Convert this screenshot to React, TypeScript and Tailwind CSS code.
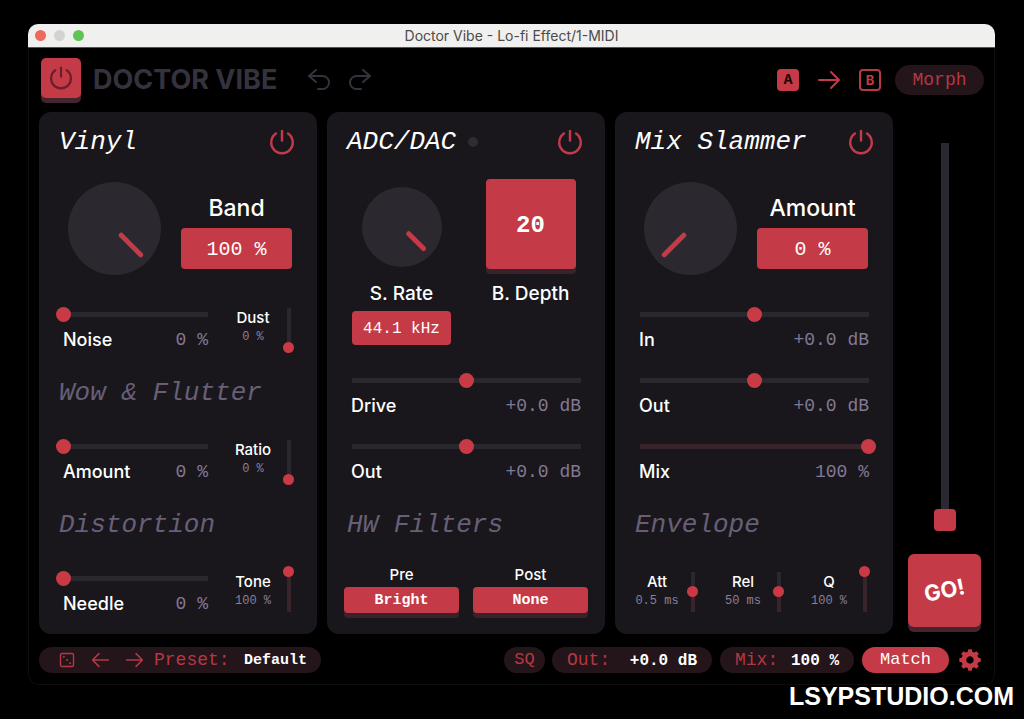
import { useId, useState } from "react";
import type { CSSProperties, ReactNode } from "react";
import { clsx } from "clsx";

const MONO = "font-['Liberation_Mono',monospace]";
const SANS = "font-['Inter',sans-serif]";

const PowerIcon = ({ className }: { className?: string }) => (
  <svg viewBox="0 0 28 28" fill="none" stroke="currentColor" strokeWidth="2.6" strokeLinecap="round" className={className}>
    <path d="M14 2v10.5" />
    <path d="M7.5 4.9a11.6 11.6 0 1 0 13 0" />
  </svg>
);

const UndoIcon = ({ className }: { className?: string }) => (
  <svg viewBox="0 0 24 24" fill="none" stroke="currentColor" strokeWidth="2" strokeLinecap="round" strokeLinejoin="round" className={className}>
    <path d="M9 2 2 8l7 6" />
    <path d="M2 8h13.5a6.5 6.5 0 0 1 0 13H11" />
  </svg>
);

const ArrowIcon = ({ className }: { className?: string }) => (
  <svg viewBox="0 0 24 20" fill="none" stroke="currentColor" strokeWidth="2" strokeLinecap="round" strokeLinejoin="round" className={className}>
    <path d="M2 10h20M14 2l8 8-8 8" />
  </svg>
);

const DiceIcon = () => (
  <svg viewBox="0 0 16 16" fill="none" stroke="currentColor" strokeWidth="1.4" className="size-4">
    <rect x="1.5" y="1.5" width="13" height="13" rx="1.5" />
    <g fill="currentColor" stroke="none">
      <circle cx="4.8" cy="4.8" r="1" />
      <circle cx="8" cy="8" r="1" />
      <circle cx="11.2" cy="11.2" r="1" />
    </g>
  </svg>
);

const TEETH = [0, 45, 90, 135, 180, 225, 270, 315];

const GearIcon = () => (
  <svg viewBox="-11 -11 22 22" className="size-[22px]">
    <circle r="6.1" fill="none" stroke="currentColor" strokeWidth="4.8" />
    {TEETH.map((angle) => (
      <path key={angle} d="M-2.4 -7.5-1.7 -10.7h3.4L2.4 -7.5z" fill="currentColor" transform={`rotate(${angle})`} />
    ))}
  </svg>
);

interface RangeProps {
  id?: string;
  label?: string;
  value: number;
  bipolar?: boolean;
}

const fillStyle = (value: number, bipolar?: boolean) =>
  ({ "--fill": `${bipolar ? 0 : value}%` }) as CSSProperties;

const HRange = ({ id, value, bipolar }: RangeProps) => {
  const [current, setCurrent] = useState(value);
  return (
    <input
      id={id}
      type="range"
      value={current}
      onChange={(e) => setCurrent(Number(e.target.value))}
      style={fillStyle(current, bipolar)}
      className="block h-[15px] w-full cursor-pointer appearance-none bg-[linear-gradient(to_right,#3a242b_var(--fill),#2a282e_var(--fill))] bg-[length:calc(100%-15px)_5px] bg-center bg-no-repeat [&::-webkit-slider-thumb]:size-[15px] [&::-webkit-slider-thumb]:appearance-none [&::-webkit-slider-thumb]:rounded-full [&::-webkit-slider-thumb]:bg-[#c93a47]"
    />
  );
};

const VRange = ({ id, value }: RangeProps) => {
  const [current, setCurrent] = useState(value);
  return (
    <input
      id={id}
      type="range"
      value={current}
      onChange={(e) => setCurrent(Number(e.target.value))}
      style={fillStyle(current)}
      className="block h-[51px] w-[11px] shrink-0 cursor-pointer appearance-none bg-[linear-gradient(to_top,#3a242b_var(--fill),#2a282e_var(--fill))] bg-[length:4px_calc(100%-11px)] bg-center bg-no-repeat [direction:rtl] [writing-mode:vertical-lr] [&::-webkit-slider-thumb]:size-[11px] [&::-webkit-slider-thumb]:appearance-none [&::-webkit-slider-thumb]:rounded-full [&::-webkit-slider-thumb]:bg-[#c93a47]"
    />
  );
};

const SliderRow = ({ label, text, value, bipolar }: RangeProps & { text: string }) => {
  const id = useId();
  return (
    <div className="h-[52px] flex-1 pt-[5px]">
      <HRange id={id} value={value} bipolar={bipolar} />
      <div className="mt-1 flex items-center justify-between px-[7px] leading-7">
        <label htmlFor={id} className={clsx(SANS, "text-[18px] font-medium text-white")}>{label}</label>
        <output htmlFor={id} className={clsx(MONO, "text-[18px] text-[#847895]")}>{text}</output>
      </div>
    </div>
  );
};

const MiniSlider = ({ label, text, value }: RangeProps & { text: string }) => {
  const id = useId();
  return (
    <div className="flex items-start gap-2">
      <div className="flex w-11 flex-col items-center pt-1.5 whitespace-nowrap">
        <label htmlFor={id} className={clsx(SANS, "text-[15px] leading-5 font-medium text-white")}>{label}</label>
        <output htmlFor={id} className={clsx(MONO, "text-[12px] leading-[18px] text-[#8b7f9c]")}>{text}</output>
      </div>
      <VRange id={id} value={value} />
    </div>
  );
};

const Knob = ({ label, value, size }: { label: string; value: number; size: number }) => {
  const [current, setCurrent] = useState(value);
  const r = size / 2;
  return (
    <div className="relative shrink-0" style={{ width: size, height: size }}>
      <svg viewBox={`${-r} ${-r} ${size} ${size}`} className="size-full">
        <circle r={r} fill="#2b2830" />
        <line
          y1={-9.5}
          y2={9.5 - r}
          stroke="#c43a46"
          strokeWidth="5"
          strokeLinecap="round"
          transform={`rotate(${-135 + current * 2.7})`}
        />
      </svg>
      <input
        type="range"
        aria-label={label}
        value={current}
        onChange={(e) => setCurrent(Number(e.target.value))}
        className="absolute inset-0 size-full cursor-pointer opacity-0"
      />
    </div>
  );
};

const BigKnob = ({ label, text, value }: { label: string; text: string; value: number }) => {
  const id = useId();
  return (
    <div className="mt-2.5 flex h-[120px] gap-5 pl-3">
      <Knob label={label} value={value} size={93} />
      <div className="mt-2.5 flex w-[111px] flex-col items-center gap-1">
        <label htmlFor={id} className={clsx(SANS, "text-[23px] leading-8 font-medium text-white")}>{label}</label>
        <input
          id={id}
          defaultValue={text}
          className={clsx(MONO, "h-[41px] w-full rounded bg-[#c43a46] pt-0.5 text-center text-[20px] text-white")}
        />
      </div>
    </div>
  );
};

interface PanelProps {
  title: string;
  led?: boolean;
  headerClassName?: string;
  children: ReactNode;
}

const Panel = ({ title, led, headerClassName = "pr-[5px]", children }: PanelProps) => (
  <section className="min-w-0 flex-1 rounded-xl bg-[#19171b] px-[17px] pb-4">
    <header className={clsx("flex h-[60px] items-center pl-[3px]", headerClassName)}>
      <h2 className={clsx(MONO, "text-[26px] whitespace-nowrap text-white italic")}>{title}</h2>
      {led && <span className="ml-3 size-2.5 rounded-full bg-[#2e2c32]" />}
      <button type="button" aria-label={`${title} power`} className="ml-auto text-[#c43a4b]">
        <PowerIcon className="size-[26px]" />
      </button>
    </header>
    {children}
  </section>
);

const SubHeading = ({ children }: { children: ReactNode }) => (
  <h3 className={clsx(MONO, "mt-[21px] pl-[3px] text-[26px] leading-9 text-[#675f77] italic")}>{children}</h3>
);

const FilterButton = ({ label, value }: { label: string; value: string }) => {
  const id = useId();
  return (
    <div className="flex flex-col items-center gap-0.5">
      <label htmlFor={id} className={clsx(SANS, "text-[15px] leading-5 font-medium text-white")}>{label}</label>
      <button
        id={id}
        type="button"
        className={clsx(MONO, "h-[26px] w-full rounded bg-[#c43a46] pt-0.5 text-[15px] font-bold text-white shadow-[0_5px_0_#38232a]")}
      >
        {value}
      </button>
    </div>
  );
};

const Pill = ({ label, value, className }: { label: string; value: string; className?: string }) => (
  <button
    type="button"
    className={clsx(MONO, "flex h-[26px] items-center rounded-full bg-[#24151a] px-[15px] whitespace-nowrap", className)}
  >
    <span className="text-[18px] text-[#b53845]">{label}</span>
    <span className="ml-auto pt-0.5 text-[16px] font-bold text-white">{value}</span>
  </button>
);

const TitleBar = () => (
  <div className="relative flex h-6 items-center justify-center border-b border-[#555] bg-[#f0f0ee]">
    <div className="absolute left-[7px] flex gap-2">
      <span className="size-[11px] rounded-full bg-[#ec6a5e]" />
      <span className="size-[11px] rounded-full bg-[#d3d3d1]" />
      <span className="size-[11px] rounded-full bg-[#5ec454]" />
    </div>
    <span className={clsx(SANS, "text-[14px] leading-5 text-[#4b4b4b]")}>Doctor Vibe - Lo-fi Effect/1-MIDI</span>
  </div>
);

const Toolbar = () => (
  <div className="flex h-16 items-center pl-0.5">
    <button
      type="button"
      aria-label="Power"
      className="mb-[5px] grid size-10 place-items-center rounded-[5px] bg-[#c43a46] text-[#6b1f2a] shadow-[0_5px_0_#45252d]"
    >
      <PowerIcon className="size-6" />
    </button>
    <h1 className={clsx(SANS, "ml-3 text-[27px] font-bold whitespace-nowrap text-[#35323d]")}>DOCTOR VIBE</h1>
    <button type="button" aria-label="Undo" className="ml-[30px] text-[#35323d]">
      <UndoIcon className="size-6" />
    </button>
    <button type="button" aria-label="Redo" className="ml-[17px] text-[#35323d]">
      <UndoIcon className="size-6 -scale-x-100" />
    </button>
    <div className={clsx(SANS, "ml-auto flex items-center text-[#c43a46]")}>
      <button type="button" className="size-[22px] rounded-sm bg-[#c43a46] text-[13px] font-bold text-[#1a080b]">A</button>
      <button type="button" aria-label="Copy A to B" className="ml-[18px]">
        <ArrowIcon className="h-5 w-6" />
      </button>
      <button type="button" className="ml-[18px] grid size-[22px] place-items-center rounded-sm border-2 border-[#b53845] text-[13px] font-bold">B</button>
      <button type="button" className={clsx(MONO, "ml-[14px] h-[30px] w-[89px] rounded-full bg-[#24151a] text-[18px] text-[#b53845]")}>
        Morph
      </button>
    </div>
  </div>
);

const VinylPanel = () => (
  <Panel title="Vinyl">
    <BigKnob label="Band" text="100 %" value={100} />
    <div className="flex gap-4 pr-[6px]">
      <SliderRow label="Noise" text="0 %" value={0} />
      <MiniSlider label="Dust" text="0 %" value={0} />
    </div>
    <SubHeading>Wow &amp; Flutter</SubHeading>
    <div className="mt-[23px] flex gap-4 pr-[6px]">
      <SliderRow label="Amount" text="0 %" value={0} />
      <MiniSlider label="Ratio" text="0 %" value={0} />
    </div>
    <SubHeading>Distortion</SubHeading>
    <div className="mt-[23px] flex gap-4 pr-[6px]">
      <SliderRow label="Needle" text="0 %" value={0} />
      <MiniSlider label="Tone" text="100 %" value={100} />
    </div>
  </Panel>
);

const ConverterPanel = () => (
  <Panel title="ADC/DAC" led>
    <div className={clsx(SANS, "mt-[7px] grid grid-cols-2 gap-[14px] text-[19px] leading-6 font-medium text-white")}>
      <div className="flex flex-col items-center">
        <div className="flex h-[95px] items-center">
          <Knob label="Sample rate" value={100} size={80} />
        </div>
        <label htmlFor="sample-rate" className="mt-2">S. Rate</label>
        <input
          id="sample-rate"
          defaultValue="44.1 kHz"
          className={clsx(MONO, "mt-[5px] h-[34px] w-[99px] rounded bg-[#c43a46] pt-0.5 text-center text-[16px] font-normal text-white")}
        />
      </div>
      <div className="flex flex-col items-center">
        <button
          id="bit-depth"
          type="button"
          className={clsx(MONO, "mb-[5px] size-[90px] rounded bg-[#c43a46] pt-1 text-[24px] font-bold text-white shadow-[0_5px_0_#38232a]")}
        >
          20
        </button>
        <label htmlFor="bit-depth" className="mt-2">B. Depth</label>
      </div>
    </div>
    <div className="mt-[23px] flex flex-col gap-[14px]">
      <SliderRow label="Drive" text="+0.0 dB" value={50} bipolar />
      <SliderRow label="Out" text="+0.0 dB" value={50} bipolar />
    </div>
    <SubHeading>HW Filters</SubHeading>
    <div className="mt-[22px] grid grid-cols-2 gap-[14px]">
      <FilterButton label="Pre" value="Bright" />
      <FilterButton label="Post" value="None" />
    </div>
  </Panel>
);

const MixPanel = () => (
  <Panel title="Mix Slammer" headerClassName="pr-0.5">
    <BigKnob label="Amount" text="0 %" value={0} />
    <div className="flex flex-col gap-[14px]">
      <SliderRow label="In" text="+0.0 dB" value={50} bipolar />
      <SliderRow label="Out" text="+0.0 dB" value={50} bipolar />
      <SliderRow label="Mix" text="100 %" value={100} />
    </div>
    <SubHeading>Envelope</SubHeading>
    <div className="mt-[23px] flex justify-between pr-[6px] pl-[3px]">
      <MiniSlider label="Att" text="0.5 ms" value={50} />
      <MiniSlider label="Rel" text="50 ms" value={50} />
      <MiniSlider label="Q" text="100 %" value={100} />
    </div>
  </Panel>
);

const MorphColumn = () => (
  <aside className="flex w-[81px] shrink-0 flex-col items-center pt-5 pb-0.5 pl-0.5">
    <input
      type="range"
      aria-label="Morph amount"
      defaultValue={0}
      className="block min-h-0 w-[22px] flex-1 cursor-pointer appearance-none bg-[linear-gradient(#2b2831,#2b2831)] bg-[length:8px_calc(100%-22px)] bg-center bg-no-repeat [direction:rtl] [writing-mode:vertical-lr] [&::-webkit-slider-thumb]:size-[22px] [&::-webkit-slider-thumb]:appearance-none [&::-webkit-slider-thumb]:rounded [&::-webkit-slider-thumb]:bg-[#c43a46]"
    />
    <button
      type="button"
      className={clsx(SANS, "mt-[23px] mb-[5px] grid size-[73px] place-items-center rounded-md bg-[#c43a46] text-[22px] font-bold text-white shadow-[0_5px_0_#45252d]")}
    >
      <span className="-rotate-12">GO!</span>
    </button>
  </aside>
);

const StatusBar = () => (
  <div className="mt-[13px] mb-[11px] flex items-center">
    <div className={clsx(MONO, "flex h-[26px] w-[282px] items-center rounded-full bg-[#24151a] pr-[14px] pl-5 text-[#b53845]")}>
      <button type="button" aria-label="Random preset"><DiceIcon /></button>
      <button type="button" aria-label="Previous preset" className="ml-4"><ArrowIcon className="h-4 w-[19px] rotate-180" /></button>
      <button type="button" aria-label="Next preset" className="ml-[15px]"><ArrowIcon className="h-4 w-[19px]" /></button>
      <span className="ml-2.5 text-[18px]">Preset:</span>
      <span className="ml-auto pt-0.5 text-[15px] font-bold text-white">Default</span>
    </div>
    <button type="button" className={clsx(MONO, "ml-auto h-[26px] w-[41px] rounded-full bg-[#24151a] text-[17px] text-[#b53845]")}>SQ</button>
    <Pill label="Out:" value="+0.0 dB" className="ml-[7px] w-40" />
    <Pill label="Mix:" value="100 %" className="ml-2 w-[134px]" />
    <button type="button" className={clsx(MONO, "ml-2 h-[26px] w-[87px] rounded-full bg-[#c43a46] text-[17px] text-white")}>Match</button>
    <button type="button" aria-label="Settings" className="mr-[3px] ml-2.5 text-[#c43a46]"><GearIcon /></button>
  </div>
);

export default function App() {
  return (
    <div className="min-h-screen bg-black pt-6">
      <main className="mr-[29px] ml-7 overflow-hidden rounded-[10px] bg-black">
        <TitleBar />
        <div className="rounded-b-[10px] border border-t-0 border-[#0e0e0f] px-2.5">
          <Toolbar />
          <div className="flex gap-2.5">
            <VinylPanel />
            <ConverterPanel />
            <MixPanel />
            <MorphColumn />
          </div>
          <StatusBar />
        </div>
      </main>
      <p className="pr-2.5 text-right font-['Liberation_Sans',sans-serif] text-[25px] leading-[22px] font-bold text-white">
        LSYPSTUDIO.COM
      </p>
    </div>
  );
}
